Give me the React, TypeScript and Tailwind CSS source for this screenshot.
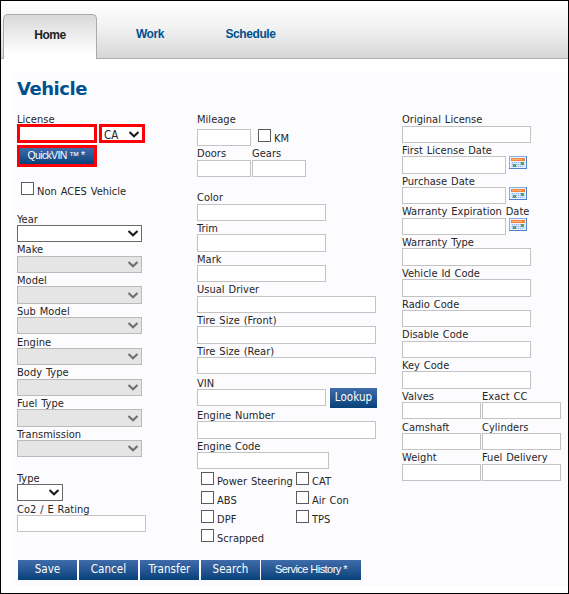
import type { ReactNode } from "react";

function Label({ children }: { children: ReactNode }) {
  return (
    <div className="h-[13.45px] whitespace-nowrap leading-[13.45px]">
      <span className="relative top-[1.2px]">{children}</span>
    </div>
  );
}

function Box({ w }: { w: string }) {
  return <div className={`h-[17.3px] border border-[#c3c3c3] bg-white ${w}`} />;
}

function Field({ label, w }: { label: string; w: string }) {
  return (
    <div>
      <Label>{label}</Label>
      <Box w={w} />
    </div>
  );
}

function Chevron({ color }: { color: string }) {
  return (
    <svg width="10" height="7" viewBox="0 0 10 7" fill="none" className="shrink-0">
      <path d="M0.5 1 L5 5.2 L9.5 1" stroke={color} strokeWidth="2.1" />
    </svg>
  );
}

function SelectField({ label, active, w = "w-[125px]" }: { label: string; active?: boolean; w?: string }) {
  return (
    <div>
      <Label>{label}</Label>
      <div
        className={`flex h-[17.3px] items-center justify-end border pr-[3px] ${w} ${
          active ? "border-[#6a6a6a] bg-white" : "border-[#bababa] bg-[#e5e5e5]"
        }`}
      >
        <Chevron color={active ? "#1c1c1c" : "#6f6f6f"} />
      </div>
    </div>
  );
}

function Check({ label }: { label: string }) {
  return (
    <div className="flex h-[19px] whitespace-nowrap">
      <div className="size-[13px] shrink-0 border border-[#5c5c5c] bg-white" />
      <span className="ml-[3px] mt-[3px] leading-[13px]">{label}</span>
    </div>
  );
}

function Calendar() {
  return (
    <svg width="18" height="13" viewBox="0 0 18 13" shapeRendering="crispEdges">
      <rect width="18" height="13" fill="#4f81c4" />
      <rect x="0" y="0" width="17" height="12" fill="#86aee0" />
      <rect x="1" y="1" width="16" height="11" fill="#eaf2fd" />
      <rect x="2" y="2" width="14" height="3" fill="#f4843c" />
      <rect x="3" y="3" width="10" height="1" fill="#ffb070" />
      <rect x="2" y="6" width="14" height="5" fill="#d6e3f8" />
      {[6, 8, 10].map((y) =>
        [3, 5, 7, 9, 11, 13].map((x) => <rect key={`${x}-${y}`} x={x} y={y} width="1" height="1" fill="#8fb0e4" />)
      )}
      <rect x="12" y="6" width="3" height="3" fill="#57a457" />
      <rect x="4" y="8" width="3" height="3" fill="#57a457" />
    </svg>
  );
}

function DateField({ label }: { label: string }) {
  return (
    <div>
      <Label>{label}</Label>
      <div className="flex h-[17.3px] gap-[3px]">
        <Box w="w-[104px]" />
        <Calendar />
      </div>
    </div>
  );
}

function Button({
  children,
  w,
  h = "h-5",
  text = "text-[11.5px] tracking-[0.05px]",
}: {
  children: ReactNode;
  w: string;
  h?: string;
  text?: string;
}) {
  return (
    <div
      className={`flex items-center justify-center whitespace-nowrap bg-linear-to-b from-[#3f6cab] to-[#04427a] text-white ${w} ${h} ${text}`}
    >
      {children}
    </div>
  );
}

export default function App() {
  return (
    <div className="flex h-[594px] w-[569px] flex-col overflow-hidden border border-black bg-white pt-[5px] font-['DejaVu_Sans_Condensed','DejaVu_Sans',sans-serif] text-[11px] tracking-[0.03px] text-[#262626] [word-spacing:0.7px]">
      <nav className="flex h-[53px] shrink-0 items-end border-b border-[#aeaeae] bg-linear-to-b from-[#fdfdfd] from-0% via-[#f2f2f2] via-40% to-[#d7d7d7] font-['Liberation_Sans',sans-serif] text-[12px] font-bold tracking-[-0.4px] text-[#00508f]">
        <div className="z-10 -mb-px ml-[2px] flex h-[45px] w-[94px] items-center justify-center rounded-t-[5px] border border-b-0 border-[#aaaaaa] bg-linear-to-b from-[#d9d9d9] to-white to-90% pb-[5px] text-[#222222]">
          Home
        </div>
        <div className="flex h-[44px] w-[106px] items-center justify-center pb-[5px]">Work</div>
        <div className="flex h-[44px] w-[95px] items-center justify-center pb-[5px]">Schedule</div>
      </nav>

      <main className="ml-[11px] mt-[13px] flex h-[514px] flex-col bg-[#fcfcff] pl-[5px]">
        <h1 className="h-[40.1px] pt-[5px] font-['DejaVu_Sans',sans-serif] text-[18px] font-bold leading-6 tracking-[-0.45px] text-[#00508f]">
          Vehicle
        </h1>

        <div className="flex h-[447.9px]">
          <section className="w-[180px]">
            <Label>License</Label>
            <div className="-mt-[1.55px] flex gap-[2px]">
              <div className="h-[19px] w-[80px] border-[3px] border-[#fb0007] bg-white" />
              <div className="flex h-[19px] w-[46px] items-center justify-between border-[3px] border-[#fb0007] bg-white pl-[2px] pr-[3px] pt-[2px]">
                <span className="pt-px text-[11.5px] leading-[12px]">CA</span>
                <Chevron color="#1c1c1c" />
              </div>
            </div>
            <div className="mt-[2px] h-[22px] w-[80px] border-[3px] border-[#fb0007]">
              <Button
                w="w-[74px]"
                h="h-[16px]"
                text="pb-px pr-[2px] font-['Liberation_Sans',sans-serif] text-[10.5px] tracking-[-0.65px] [word-spacing:0px]"
              >
                QuickVIN ™ *
              </Button>
            </div>
            <div className="ml-1 mt-[15px] h-[29.55px]">
              <Check label="Non ACES Vehicle" />
            </div>
            <SelectField label="Year" active />
            <SelectField label="Make" />
            <SelectField label="Model" />
            <SelectField label="Sub Model" />
            <SelectField label="Engine" />
            <SelectField label="Body Type" />
            <SelectField label="Fuel Type" />
            <SelectField label="Transmission" />
            <div className="h-[13.2px]" />
            <SelectField label="Type" active w="w-[46px]" />
            <Field label="Co2 / E Rating" w="w-[129px]" />
          </section>

          <section className="w-[205px]">
            <Label>Mileage</Label>
            <div className="mt-[3.45px] flex h-[17.3px] gap-[7px]">
              <Box w="w-[54px]" />
              <Check label="KM" />
            </div>
            <div className="flex h-[43.8px] gap-px">
              <Field label="Doors" w="w-[54px]" />
              <Field label="Gears" w="w-[54px]" />
            </div>
            <Field label="Color" w="w-[129px]" />
            <Field label="Trim" w="w-[129px]" />
            <Field label="Mark" w="w-[129px]" />
            <Field label="Usual Driver" w="w-[179px]" />
            <Field label="Tire Size (Front)" w="w-[179px]" />
            <Field label="Tire Size (Rear)" w="w-[179px]" />
            <div className="flex h-[33.4px] items-end gap-1">
              <div className="h-[32.4px]">
                <Field label="VIN" w="w-[129px]" />
              </div>
              <Button w="w-[47px]">Lookup</Button>
            </div>
            <Field label="Engine Number" w="w-[179px]" />
            <Field label="Engine Code" w="w-[132px]" />
            <div className="ml-1 mt-[3px] grid grid-cols-[95px_80px]">
              <Check label="Power Steering" />
              <Check label="CAT" />
              <Check label="ABS" />
              <Check label="Air Con" />
              <Check label="DPF" />
              <Check label="TPS" />
              <Check label="Scrapped" />
            </div>
          </section>

          <section>
            <Field label="Original License" w="w-[129px]" />
            <DateField label="First License Date" />
            <DateField label="Purchase Date" />
            <DateField label="Warranty Expiration Date" />
            <Field label="Warranty Type" w="w-[129px]" />
            <Field label="Vehicle Id Code" w="w-[129px]" />
            <Field label="Radio Code" w="w-[129px]" />
            <Field label="Disable Code" w="w-[129px]" />
            <Field label="Key Code" w="w-[129px]" />
            <div className="grid grid-cols-[80px_79px]">
              <Field label="Valves" w="w-[79px]" />
              <Field label="Exact CC" w="w-[79px]" />
              <Field label="Camshaft" w="w-[79px]" />
              <Field label="Cylinders" w="w-[79px]" />
              <Field label="Weight" w="w-[79px]" />
              <Field label="Fuel Delivery" w="w-[79px]" />
            </div>
          </section>
        </div>

        <div className="ml-px flex gap-[2px]">
          <Button w="w-[59px]">Save</Button>
          <Button w="w-[59px]">Cancel</Button>
          <Button w="w-[59px]">Transfer</Button>
          <Button w="w-[59px]">Search</Button>
          <Button
            w="w-[100px]"
            text="-ml-px pb-[2px] font-['Liberation_Sans',sans-serif] text-[11px] tracking-[-0.55px] [word-spacing:0px]"
          >
            Service History *
          </Button>
        </div>
      </main>
    </div>
  );
}
